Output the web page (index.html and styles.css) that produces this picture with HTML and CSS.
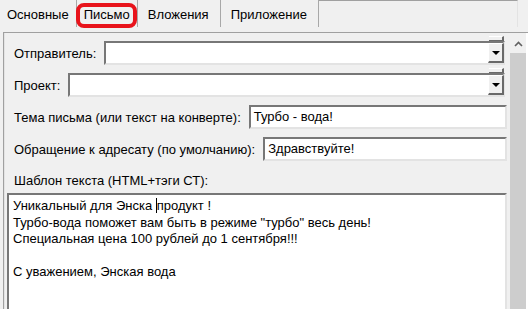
FILE: index.html
```html
<!DOCTYPE html>
<html lang="ru">
<head>
    <meta charset="UTF-8">
    <title>Письмо</title>
    <link rel="stylesheet" href="styles.css">
</head>
<body>
    <!-- Tab strip -->
    <div class="tabs">
        <div class="tab">Основные</div>
        <div class="tab active">Письмо</div>
        <div class="tab tab-wide">Вложения</div>
        <div class="tab tab-wide">Приложение</div>
        <div class="tab-fill"></div>
    </div>

    <div class="page">
        <div class="form">
            <div class="row">
                <span class="label">Отправитель:</span>
                <div class="field combo">
                    <span class="drop-tab"></span>
                    <span class="drop-btn"><span class="arrow"></span></span>
                </div>
            </div>
            <div class="row">
                <span class="label">Проект:</span>
                <div class="field combo">
                    <span class="drop-tab"></span>
                    <span class="drop-btn"><span class="arrow"></span></span>
                </div>
            </div>
            <div class="row">
                <span class="label">Тема письма (или текст на конверте):</span>
                <div class="field wide">Турбо - вода!</div>
            </div>
            <div class="row">
                <span class="label">Обращение к адресату (по умолчанию):</span>
                <div class="field wide">Здравствуйте!</div>
            </div>
            <div class="row caption">
                <span class="label">Шаблон текста (HTML+тэги СТ):</span>
            </div>
            <div class="memo">
                <div>Уникальный для Энска <span class="caret"></span>продукт !</div>
                <div>Турбо-вода поможет вам быть в режиме "турбо" весь день!</div>
                <div>Специальная цена 100 рублей до 1 сентября!!!</div>
                <div>&nbsp;</div>
                <div>С уважением, Энская вода</div>
            </div>
        </div>

        <!-- Vertical scrollbar -->
        <div class="vscroll">
            <div class="vscroll-up">
                <svg width="9" height="6" viewBox="0 0 9 6"><path d="M1 5 L4.5 1.5 L8 5" fill="none" stroke="#606060" stroke-width="1.6"/></svg>
            </div>
            <div class="vscroll-track"></div>
        </div>
    </div>
</body>
</html>
```

FILE: styles.css
```css
/* General styles */
body {
    margin: 0;
    width: 528px;
    height: 309px;
    overflow: hidden;
    background: #f0f0f0;
    font-family: "Liberation Sans", Arial, sans-serif;
    font-size: 13px;
    color: #000;
}

/* Tabs */
.tabs {
    display: flex;
    height: 32px;
}

.tab {
    height: 27px;
    line-height: 30px;
    padding: 0 7px 0 7px;
    border-right: 1px solid #a8a8a8;
    white-space: nowrap;
}

.tab-wide {
    padding: 0 11px 0 10px;
}

.tab.active {
    position: relative;
}

.tab.active::after {
    content: "";
    position: absolute;
    left: -1px;
    top: 3px;
    right: 0;
    bottom: -1px;
    border: 4px solid #e8131b;
    border-radius: 8px;
}

.tab-fill {
    width: 198px;
    height: 26px;
    border-top: 1px solid #a0a0a0;
    border-right: 1px solid #e3e3e3;
}

/* Page body */
.page {
    display: flex;
    margin-left: 3px;
    border-top: 1px solid #a0a0a0;
    border-left: 1px solid #a0a0a0;
    height: 276px;
    overflow: hidden;
}

.form {
    width: 500px;
    display: flex;
    flex-direction: column;
    padding: 8px 0 0 2px;
    border-left: 1px solid #e3e3e3;
}

.row {
    display: flex;
    align-items: center;
    height: 24px;
    flex-shrink: 0;
    padding-left: 7px;
    margin-bottom: 8px;
}

.label {
    white-space: nowrap;
    margin-right: 8px;
}

.caption {
    height: 18px;
    margin-top: 2px;
    margin-bottom: 4px;
}

/* Inputs */
.field {
    position: relative;
    flex: 1;
    height: 20px;
    line-height: 20px;
    padding-left: 3px;
    background: #fff;
    border-top: 2px solid #777;
    border-left: 2px solid #777;
    border-bottom: 2px solid #e3e3e3;
    border-right: 2px solid #e3e3e3;
    margin-right: 2px;
}

.field.wide {
    margin-right: 0;
}

.drop-btn {
    position: absolute;
    right: -1px;
    top: 0;
    width: 13px;
    height: 17px;
    background: #f0f0f0;
    border-top: 1px solid #fff;
    border-left: 1px solid #fff;
    border-right: 2px solid #696969;
    border-bottom: 2px solid #696969;
    display: flex;
    align-items: center;
    justify-content: center;
}

.arrow {
    width: 0;
    height: 0;
    border-left: 4px solid transparent;
    border-right: 4px solid transparent;
    border-top: 4px solid #000;
}

.drop-tab {
    position: absolute;
    right: -1px;
    top: -7px;
    width: 13px;
    height: 3px;
    background: #f0f0f0;
    border-top: 1px solid #fff;
    border-right: 2px solid #696969;
    border-bottom: 1px solid #696969;
}

/* Memo */
.memo {
    flex: 1;
    background: #fff;
    border-top: 2px solid #777;
    border-left: 2px solid #777;
    border-right: 2px solid #e3e3e3;
    padding: 3px 0 0 4px;
    line-height: 16.6px;
}

.caret {
    display: inline-block;
    width: 1px;
    height: 15px;
    background: #000;
    vertical-align: -3px;
}

/* Scrollbar */
.vscroll {
    width: 16px;
    margin-left: 3px;
    display: flex;
    flex-direction: column;
    border-right: 2px solid #fff;
}

.vscroll-up {
    height: 18px;
    display: flex;
    justify-content: center;
    align-items: center;
    padding-top: 2px;
}

.vscroll-track {
    flex: 1;
    background: #cdcdcd;
}
```
